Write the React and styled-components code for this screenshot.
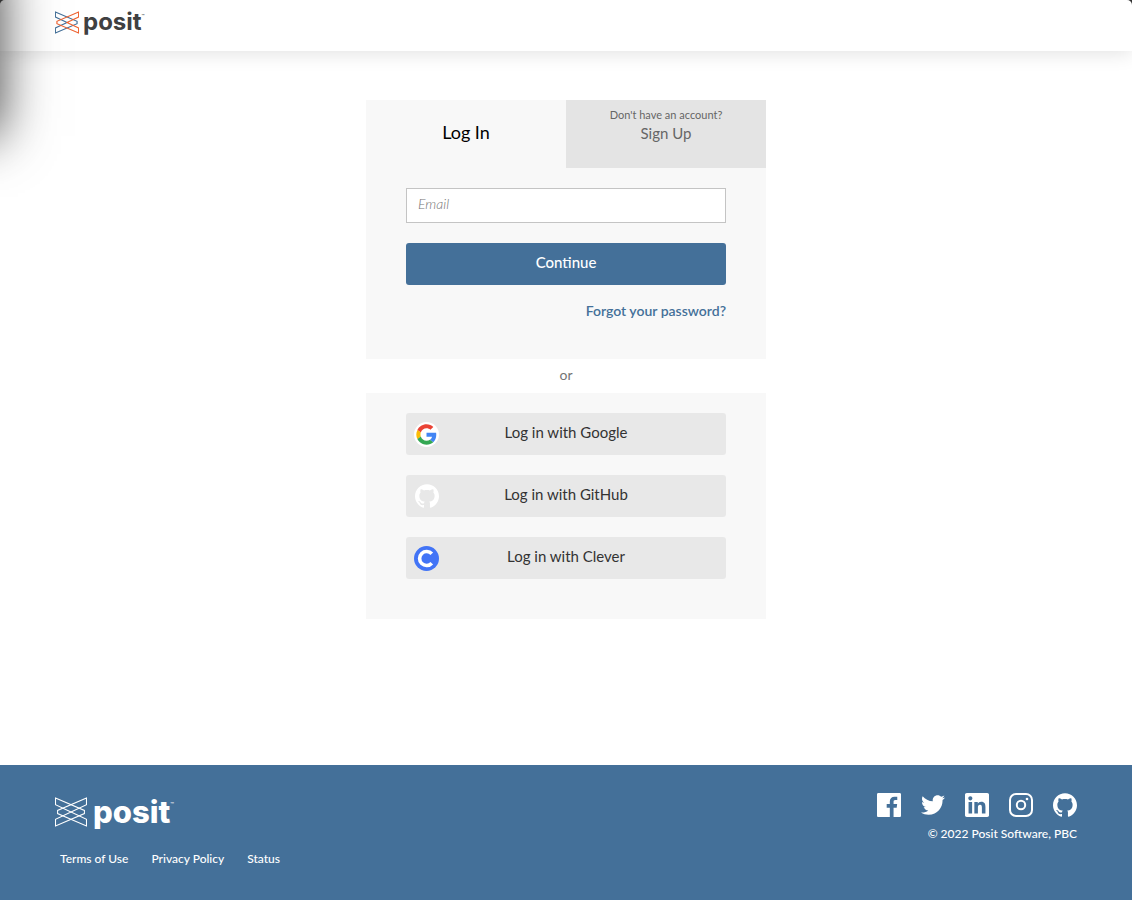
import React from "react";
import styled, { createGlobalStyle } from "styled-components";
import { FaTwitter } from "react-icons/fa";

const GlobalStyle = createGlobalStyle`
  * { box-sizing: border-box; }
  body {
    margin: 0;
    background: #333;
    font-family: Lato, "Open Sans", sans-serif;
    font-size: 14px;
    color: #404041;
  }
  button, input { font-family: inherit; }
`;

const Page = styled.div`
  position: relative;
  display: flex;
  flex-direction: column;
  min-height: 100vh;
  overflow: hidden;
  background: #fff;
  border-radius: 5px 5px 0 0;
`;

const EdgeShadow = styled.div`
  position: absolute;
  top: -40px;
  left: -200px;
  width: 200px;
  height: 176px;
  box-shadow: 0 0 50px rgba(0, 0, 0, 0.75);
  pointer-events: none;
`;

const Header = styled.header`
  display: flex;
  align-items: flex-start;
  height: 51px;
  padding: 8px 55px;
  box-shadow: 0 2px 20px rgba(0, 0, 0, 0.12);
`;

const Brand = styled.a`
  display: inline-flex;
  align-items: center;
  gap: ${(p) => (p.$large ? "6px" : "4px")};
  color: ${(p) => (p.$large ? "#fff" : "#404041")};
  text-decoration: none;
`;

const Wordmark = styled.span`
  font-family: Inter, sans-serif;
  font-weight: ${(p) => (p.$large ? 800 : 700)};
  font-size: ${(p) => (p.$large ? "31px" : "24px")};
  line-height: ${(p) => (p.$large ? "32px" : "28px")};
`;

const Trademark = styled.sup`
  font-size: ${(p) => (p.$large ? "6px" : "5px")};
  line-height: 4px;
  font-weight: 400;
  vertical-align: ${(p) => (p.$large ? "16px" : "12px")};
`;

const Main = styled.main`
  flex: 1;
  width: 100%;
  max-width: 400px;
  margin: 0 auto;
  padding: 49px 0 60px;
`;

const Panel = styled.section`
  background: #f8f8f8;
`;

const Tabs = styled.div`
  display: grid;
  grid-template-columns: 1fr 1fr;
  height: 68px;
`;

const Tab = styled.button`
  display: flex;
  flex-direction: column;
  align-items: center;
  justify-content: ${(p) => (p.$active ? "center" : "flex-start")};
  padding: ${(p) => (p.$active ? "0 0 4px" : "6px 0 0")};
  border: 0;
  background: ${(p) => (p.$active ? "transparent" : "#e4e4e4")};
  color: ${(p) => (p.$active ? "#000" : "#666")};
  font-size: ${(p) => (p.$active ? "18px" : "15px")};
  line-height: 18px;
  cursor: pointer;
`;

const TabHint = styled.span`
  font-size: 11px;
  line-height: 18px;
`;

const Form = styled.form`
  display: flex;
  flex-direction: column;
  gap: 20px;
  padding: 20px 40px 38px;
`;

const EmailInput = styled.input`
  width: 100%;
  height: 35px;
  padding: 0 11px 4px;
  border: 1px solid #c4c4c4;
  border-radius: 0;
  background: #fff;
  font-size: 14px;
  color: #404041;
  &::placeholder {
    color: #757575;
    font-style: italic;
    font-weight: 300;
    opacity: 1;
  }
`;

const SubmitButton = styled.button`
  height: 42px;
  padding: 0 0 4px;
  border: 0;
  border-radius: 3px;
  background: #447099;
  color: #fff;
  font-size: 15px;
  font-weight: 500;
  cursor: pointer;
`;

const ForgotLink = styled.a`
  align-self: flex-end;
  margin-top: -4px;
  color: #447099;
  font-size: 14px;
  font-weight: 600;
  line-height: 20px;
  text-decoration: none;
`;

const Divider = styled.p`
  margin: 0;
  padding-bottom: 2px;
  color: #757575;
  text-align: center;
  line-height: 32px;
`;

const Providers = styled.div`
  display: flex;
  flex-direction: column;
  gap: 20px;
  padding: 20px 40px 40px;
`;

const ProviderButton = styled.button`
  display: grid;
  grid-template-columns: 25px 1fr 25px;
  align-items: center;
  justify-items: center;
  height: 42px;
  padding: 0 8px;
  border: 0;
  border-radius: 3px;
  background: #e8e8e8;
  color: #333;
  font-size: 15px;
  cursor: pointer;
`;

const ProviderLabel = styled.span`
  padding-bottom: 4px;
`;

const Footer = styled.footer`
  display: flex;
  justify-content: space-between;
  min-height: 135px;
  padding: 28px 55px;
  background: #447099;
  color: #fff;
`;

const FooterStart = styled.div`
  display: flex;
  flex-direction: column;
  gap: 22px;
  padding-top: 3px;
`;

const FooterLinks = styled.nav`
  display: flex;
  gap: 23px;
  padding-left: 5px;
`;

const FooterLink = styled.a`
  color: #fff;
  font-size: 12px;
  font-weight: 500;
  line-height: 18px;
  text-decoration: none;
`;

const FooterEnd = styled.div`
  display: flex;
  flex-direction: column;
  align-items: flex-end;
  gap: 8px;
`;

const SocialLinks = styled.nav`
  display: flex;
  gap: 20px;
`;

const SocialLink = styled.a`
  display: flex;
  color: #fff;
`;

const Copyright = styled.small`
  font-size: 12px;
  font-weight: 500;
  line-height: 18px;
`;

function Mark({ width, height, left, right, stroke }) {
  return (
    <svg width={width} height={height} viewBox="0 0 62 58" fill="none" strokeWidth={stroke} aria-hidden="true">
      <path stroke={left} d="M1 2 L57 26 V32 L1 56 V43 L31 29 L1 15 Z" />
      <path stroke={right} d="M61 2 L5 26 V32 L61 56 V43 L31 29 L61 15 Z" />
    </svg>
  );
}

function Logo({ large }) {
  return (
    <Brand href="#" $large={large} aria-label="posit">
      <Mark
        width={large ? 32 : 24}
        height={large ? 30 : 23}
        left={large ? "#fff" : "#447099"}
        right={large ? "#fff" : "#ee6331"}
        stroke={large ? 2 : 3}
      />
      <Wordmark $large={large}>
        posit<Trademark $large={large}>™</Trademark>
      </Wordmark>
    </Brand>
  );
}

const GoogleIcon = () => (
  <svg width="25" height="25" viewBox="0 0 25 25" aria-hidden="true">
    <circle cx="12.5" cy="12.5" r="12.5" fill="#fff" />
    <g transform="translate(2.3 2.3) scale(.425)">
      <path fill="#EA4335" d="M24 9.5c3.54 0 6.71 1.22 9.21 3.6l6.85-6.85C35.9 2.38 30.47 0 24 0 14.62 0 6.51 5.38 2.56 13.22l7.98 6.19C12.43 13.72 17.74 9.5 24 9.5z" />
      <path fill="#4285F4" d="M46.98 24.55c0-1.57-.15-3.09-.38-4.55H24v9.02h12.94c-.58 2.96-2.26 5.48-4.78 7.18l7.73 6c4.51-4.18 7.09-10.36 7.09-17.65z" />
      <path fill="#FBBC05" d="M10.53 28.59c-.48-1.45-.76-2.99-.76-4.59s.27-3.14.76-4.59l-7.98-6.19C.92 16.46 0 20.12 0 24c0 3.88.92 7.54 2.56 10.78l7.97-6.19z" />
      <path fill="#34A853" d="M24 48c6.48 0 11.93-2.13 15.89-5.81l-7.73-6c-2.15 1.45-4.92 2.3-8.16 2.3-6.26 0-11.57-4.22-13.47-9.91l-7.98 6.19C6.51 42.62 14.62 48 24 48z" />
    </g>
  </svg>
);

const CleverIcon = () => (
  <svg width="25" height="25" viewBox="0 0 25 25" aria-hidden="true">
    <circle cx="12.5" cy="12.5" r="12.5" fill="#4274f6" />
    <path fill="none" stroke="#fff" strokeWidth="3.6" d="M17.8 7.8 A7 7 0 1 0 17.8 17.2" />
  </svg>
);

const FacebookIcon = () => (
  <svg width="24" height="24" viewBox="0 0 24 24" fill="currentColor" aria-hidden="true">
    <path d="M22.676 0H1.324C.593 0 0 .593 0 1.324v21.352C0 23.408.593 24 1.324 24h11.494v-9.294H9.689v-3.621h3.129V8.41c0-3.099 1.894-4.785 4.659-4.785 1.325 0 2.464.097 2.796.141v3.24h-1.921c-1.5 0-1.792.721-1.792 1.771v2.311h3.584l-.465 3.63H16.56V24h6.115c.733 0 1.325-.592 1.325-1.324V1.324C24 .593 23.408 0 22.676 0" />
  </svg>
);

const LinkedinIcon = () => (
  <svg width="24" height="24" viewBox="0 0 24 24" fill="currentColor" aria-hidden="true">
    <path d="M20.447 20.452h-3.554v-5.569c0-1.328-.027-3.037-1.852-3.037-1.853 0-2.136 1.445-2.136 2.939v5.667H9.351V9h3.414v1.561h.046c.477-.9 1.637-1.85 3.37-1.85 3.601 0 4.267 2.37 4.267 5.455v6.286zM5.337 7.433c-1.144 0-2.063-.926-2.063-2.065 0-1.138.92-2.063 2.063-2.063 1.14 0 2.064.925 2.064 2.063 0 1.139-.925 2.065-2.064 2.065zm1.782 13.019H3.555V9h3.564v11.452zM22.225 0H1.771C.792 0 0 .774 0 1.729v20.542C0 23.227.792 24 1.771 24h20.451C23.2 24 24 23.227 24 22.271V1.729C24 .774 23.2 0 22.222 0h.003z" />
  </svg>
);

const InstagramIcon = () => (
  <svg width="24" height="24" viewBox="0 0 24 24" fill="none" stroke="currentColor" strokeWidth="2" aria-hidden="true">
    <rect x="1" y="1" width="22" height="22" rx="6" />
    <circle cx="12" cy="12" r="4.2" />
    <circle cx="18" cy="6" r="1.3" fill="currentColor" stroke="none" />
  </svg>
);

const GithubIcon = ({ color = "currentColor" }) => (
  <svg width="24" height="24" viewBox="0 0 24 24" fill={color} aria-hidden="true">
    <path d="M12 .297c-6.63 0-12 5.373-12 12 0 5.303 3.438 9.8 8.205 11.385.6.113.82-.258.82-.577 0-.285-.01-1.04-.015-2.04-3.338.724-4.042-1.61-4.042-1.61C4.422 18.07 3.633 17.7 3.633 17.7c-1.087-.744.084-.729.084-.729 1.205.084 1.838 1.236 1.838 1.236 1.07 1.835 2.809 1.305 3.495.998.108-.776.417-1.305.76-1.605-2.665-.3-5.466-1.332-5.466-5.93 0-1.31.465-2.38 1.235-3.22-.135-.303-.54-1.523.105-3.176 0 0 1.005-.322 3.3 1.23.96-.267 1.98-.399 3-.405 1.02.006 2.04.138 3 .405 2.28-1.552 3.285-1.23 3.285-1.23.645 1.653.24 2.873.12 3.176.765.84 1.23 1.91 1.23 3.22 0 4.61-2.805 5.625-5.475 5.92.42.36.81 1.096.81 2.22 0 1.606-.015 2.896-.015 3.286 0 .315.21.69.825.57C20.565 22.092 24 17.592 24 12.297c0-6.627-5.373-12-12-12" />
  </svg>
);

const socials = [
  { name: "Facebook", icon: <FacebookIcon /> },
  { name: "Twitter", icon: <FaTwitter size={24} /> },
  { name: "LinkedIn", icon: <LinkedinIcon /> },
  { name: "Instagram", icon: <InstagramIcon /> },
  { name: "GitHub", icon: <GithubIcon /> },
];

const providers = [
  { name: "Google", icon: <GoogleIcon /> },
  { name: "GitHub", icon: <GithubIcon color="#fff" /> },
  { name: "Clever", icon: <CleverIcon /> },
];

export default function App() {
  return (
    <Page>
      <GlobalStyle />
      <Header>
        <Logo />
      </Header>
      <Main>
        <Panel>
          <Tabs>
            <Tab type="button" $active>Log In</Tab>
            <Tab type="button">
              <TabHint>Don't have an account?</TabHint>
              Sign Up
            </Tab>
          </Tabs>
          <Form onSubmit={(e) => e.preventDefault()}>
            <EmailInput type="email" placeholder="Email" aria-label="Email" />
            <SubmitButton type="submit">Continue</SubmitButton>
            <ForgotLink href="#">Forgot your password?</ForgotLink>
          </Form>
        </Panel>
        <Divider>or</Divider>
        <Panel>
          <Providers>
            {providers.map((p) => (
              <ProviderButton type="button" key={p.name}>
                {p.icon}
                <ProviderLabel>Log in with {p.name}</ProviderLabel>
              </ProviderButton>
            ))}
          </Providers>
        </Panel>
      </Main>
      <Footer>
        <FooterStart>
          <Logo large />
          <FooterLinks>
            <FooterLink href="#">Terms of Use</FooterLink>
            <FooterLink href="#">Privacy Policy</FooterLink>
            <FooterLink href="#">Status</FooterLink>
          </FooterLinks>
        </FooterStart>
        <FooterEnd>
          <SocialLinks>
            {socials.map((s) => (
              <SocialLink href="#" key={s.name} aria-label={s.name}>{s.icon}</SocialLink>
            ))}
          </SocialLinks>
          <Copyright>© 2022 Posit Software, PBC</Copyright>
        </FooterEnd>
      </Footer>
      <EdgeShadow />
    </Page>
  );
}
